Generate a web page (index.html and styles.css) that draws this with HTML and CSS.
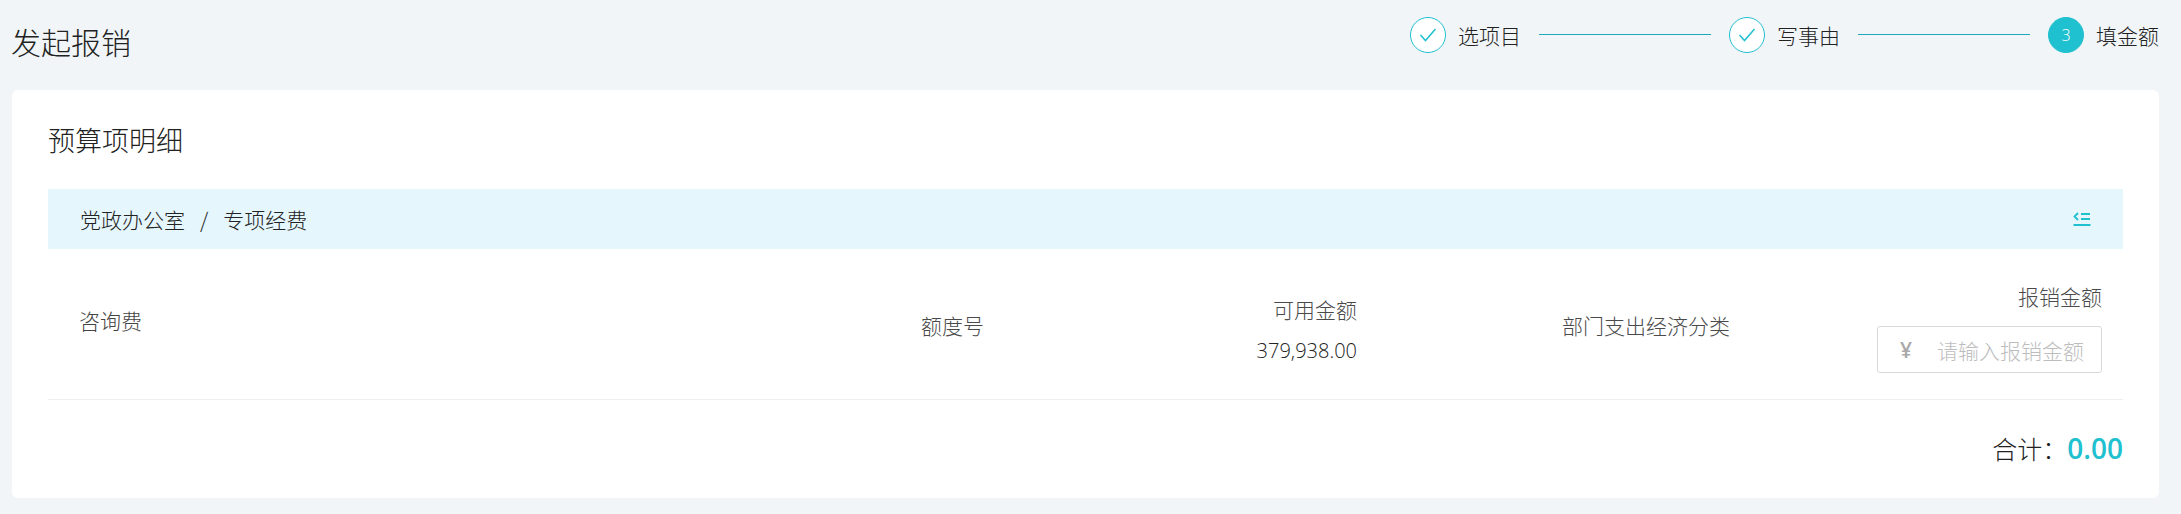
FILE: index.html
```html
<!DOCTYPE html>
<html lang="zh-CN">
<head>
<meta charset="utf-8">
<title>发起报销</title>
<link rel="stylesheet" href="styles.css">
</head>
<body>
<header class="top">
  <h1 class="page-title">发起报销</h1>
  <ol class="steps">
    <li class="step">
      <span class="dot"><svg width="18" height="14" viewBox="0 0 18 14"><path d="M1.5 7 L6.5 12.5 L16.5 1" fill="none" stroke="#1fc0cf" stroke-width="1.5"/></svg></span>
      <span class="step-name">选项目</span>
    </li>
    <li class="link"></li>
    <li class="step">
      <span class="dot"><svg width="18" height="14" viewBox="0 0 18 14"><path d="M1.5 7 L6.5 12.5 L16.5 1" fill="none" stroke="#1fc0cf" stroke-width="1.5"/></svg></span>
      <span class="step-name">写事由</span>
    </li>
    <li class="link"></li>
    <li class="step">
      <span class="dot dot-on">3</span>
      <span class="step-name">填金额</span>
    </li>
  </ol>
</header>
<main class="card">
  <h2 class="card-title">预算项明细</h2>
  <div class="bar">
    <div class="crumb"><span>党政办公室</span><span class="sep">/</span><span>专项经费</span></div>
    <svg class="collapse" width="18" height="14" viewBox="0 0 18 14"><path d="M5 1 L1.5 4.5 L5 8" fill="none" stroke="#1fc0cf" stroke-width="1.8"/><path d="M8 2H17M8 7H17M0.5 13H17.5" fill="none" stroke="#1fc0cf" stroke-width="1.8"/></svg>
  </div>
  <div class="row">
    <div class="col-name">咨询费</div>
    <div class="col-quota">额度号</div>
    <div class="col-avail">
      <div class="label">可用金额</div>
      <div class="amount">379,938.00</div>
    </div>
    <div class="col-class">部门支出经济分类</div>
    <div class="col-input">
      <div class="label">报销金额</div>
      <div class="input"><span class="yen">¥</span><span class="placeholder">请输入报销金额</span></div>
    </div>
  </div>
  <div class="total"><span class="total-label">合计：</span><span class="total-value">0.00</span></div>
</main>
</body>
</html>
```
FILE: styles.css
```css
* { box-sizing: border-box; }
html, body { margin: 0; padding: 0; }
body {
  width: 2181px;
  height: 514px;
  overflow: hidden;
  background: #f1f5f8;
  font-family: "Noto Sans CJK SC", "Open Sans", sans-serif;
  font-weight: 300;
  color: #222;
}
.top {
  display: flex;
  justify-content: space-between;
  height: 90px;
  padding: 0 22px 0 11px;
}
.page-title {
  margin: 19px 0 0;
  font-size: 30px;
  line-height: 44px;
  font-weight: 300;
  color: #222;
}
.steps {
  display: flex;
  align-items: center;
  list-style: none;
  margin: 0;
  padding: 0;
  height: 70px;
}
.step { display: flex; align-items: center; }
.dot {
  display: flex;
  align-items: center;
  justify-content: center;
  width: 36px;
  height: 36px;
  border: 1px solid #1fc0cf;
  border-radius: 50%;
  background: #fff;
  font-size: 16px;
  font-family: "Open Sans", sans-serif;
  color: #fff;
}
.dot-on { background: #1fc0cf; }
.step-name {
  margin-left: 12px;
  font-size: 21px;
  color: #222;
}
.link {
  width: 172px;
  height: 1px;
  background: #1fa9b8;
  margin: 0 18px 2px;
}
.link:first-of-type { margin-right: 19px; }
.card {
  width: 2147px;
  height: 408px;
  margin-left: 12px;
  padding: 0 36px;
  background: #fff;
  border-radius: 6px;
}
.card-title {
  margin: 0;
  padding-top: 30px;
  height: 99px;
  font-size: 27px;
  line-height: 40px;
  font-weight: 300;
  color: #222;
}
.bar {
  display: flex;
  justify-content: space-between;
  align-items: center;
  height: 60px;
  padding: 0 32px;
  background: #e5f6fd;
}
.crumb { font-size: 21px; color: #222; }
.sep { margin: 0 15px; }
.row {
  display: flex;
  height: 151px;
  border-bottom: 1px solid #eee;
  font-size: 21px;
  color: #4a4a4a;
}
.col-name { width: 873px; padding: 56px 0 0 31px; color: #444; }
.col-quota { width: 200px; padding-top: 61px; }
.col-avail { width: 236px; padding-top: 45px; text-align: right; }
.label { line-height: 30px; color: #4a4a4a; }
.amount { margin-top: 12px; font-size: 20px; line-height: 30px; color: #222; font-family: "Open Sans", sans-serif; }
.col-class { width: 206px; margin-left: 205px; padding-top: 61px; white-space: nowrap; }
.col-input { flex: 1; padding: 32px 21px 0 0; text-align: right; }
.input {
  display: flex;
  align-items: center;
  width: 225px;
  height: 47px;
  margin: 15px 0 0 auto;
  padding: 0 0 0 22px;
  border: 1px solid #d9d9d9;
  border-radius: 3px;
}
.yen { width: 37px; flex: none; color: #aaa; font-weight: 600; text-align: left; font-family: "Open Sans", sans-serif; }
.placeholder { color: #bdbdbd; white-space: nowrap; }
.total {
  display: flex;
  justify-content: flex-end;
  align-items: baseline;
  margin-top: 29px;
}
.total-label { font-size: 25px; color: #222; }
.total-value { font-size: 28px; font-weight: 600; color: #1fc0cf; font-family: "Open Sans", sans-serif; }
```
